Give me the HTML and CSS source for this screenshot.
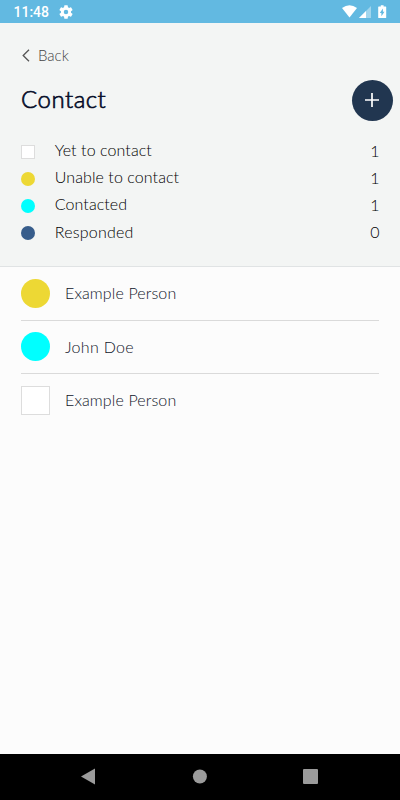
FILE: index.html
```html
<!DOCTYPE html>
<html lang="en">
<head>
<meta charset="utf-8">
<title>Contact</title>
<link rel="stylesheet" href="styles.css">
</head>
<body>
<div class="statusbar">
  <span class="time">11:48</span>
  <svg class="gear" width="14" height="14" viewBox="2 2 20 20"><path fill="#fff" d="M19.14 12.94c.04-.3.06-.61.06-.94s-.02-.64-.07-.94l2.03-1.58a.5.5 0 0 0 .12-.61l-1.92-3.32a.49.49 0 0 0-.59-.22l-2.39.96a7 7 0 0 0-1.62-.94l-.36-2.54A.48.48 0 0 0 13.92 2.4h-3.84a.48.48 0 0 0-.48.41l-.36 2.54a7.4 7.4 0 0 0-1.62.94l-2.39-.96a.49.49 0 0 0-.59.22L2.72 8.87a.48.48 0 0 0 .12.61l2.03 1.58a6 6 0 0 0 0 1.88l-2.03 1.58a.5.5 0 0 0-.12.61l1.92 3.32c.12.22.37.29.59.22l2.39-.96c.5.38 1.03.7 1.62.94l.36 2.54c.05.24.24.41.48.41h3.84c.24 0 .44-.17.48-.41l.36-2.54a7.3 7.3 0 0 0 1.62-.94l2.39.96c.22.08.47 0 .59-.22l1.92-3.32a.48.48 0 0 0-.12-.61zM12 15.2a3.2 3.2 0 1 1 0-6.4 3.2 3.2 0 0 1 0 6.4z"/></svg>
  <svg class="signals" width="46" height="14" viewBox="0 0 46 14"><path fill="#fff" d="M0 3.1Q7.5-2.7 15 3.1L7.5 12.6z"/><path fill="#fff" fill-opacity=".4" d="M29 1v12H17z"/><path fill="#fff" d="M24 6v7h-7z"/><path fill="#fff" d="M36.8 1.4h2V.2h2.8v1.2h2q.6 0 .6.6v10.4q0 .6-.6.6h-6.8q-.6 0-.6-.6V2q0-.6.6-.6z"/><path fill="#62b9e1" d="M40.9 3.6v3.1h1.6l-3.1 4.6V8.1h-1.6z"/></svg>
</div>
<header class="header">
  <div class="back"><svg width="8" height="13" viewBox="0 0 8 13"><path d="M7 .8 1.2 6.5 7 12.2" fill="none" stroke="#555" stroke-width="1.3"/></svg><span>Back</span></div>
  <div class="titlebar"><h1>Contact</h1><div class="add"><svg width="14" height="14" viewBox="0 0 14 14"><path d="M7 0v14M0 7h14" stroke="#fff" stroke-width="1.7"/></svg></div></div>
  <ul class="legend">
    <li><i class="mark box"></i><span>Yet to contact</span><b>1</b></li>
    <li><i class="mark yellow"></i><span>Unable to contact</span><b>1</b></li>
    <li><i class="mark cyan"></i><span>Contacted</span><b>1</b></li>
    <li><i class="mark blue"></i><span>Responded</span><b>0</b></li>
  </ul>
</header>
<main class="people">
  <div class="person"><i class="mark yellow"></i><span>Example Person</span></div>
  <div class="person"><i class="mark cyan"></i><span class="john">John Doe</span></div>
  <div class="person"><i class="mark box"></i><span>Example Person</span></div>
</main>
<nav class="navbar">
  <svg width="400" height="46" viewBox="0 0 400 46"><g fill="#9b9b9b"><path d="M81 22.5 95 14.5v16z"/><circle cx="199.9" cy="22.5" r="7"/><rect x="303" y="15" width="15" height="15" rx="1"/></g></svg>
</nav>
</body>
</html>
```
FILE: styles.css
```css
* { box-sizing: border-box; }
body {
  margin: 0;
  width: 400px;
  height: 800px;
  display: flex;
  flex-direction: column;
  overflow: hidden;
  background: #fcfcfc;
  font-family: Lato, sans-serif;
  font-weight: 300;
  color: #000;
}
svg { display: block; flex: none; }
.statusbar {
  height: 23px;
  background: #62b9e1;
  display: flex;
  align-items: center;
  padding: 1px 12px 0 13.5px;
}
.time {
  font: 500 14px/20px Roboto, sans-serif;
  color: #fff;
  width: 45.5px;
}
.signals { margin-left: auto; }
.header {
  height: 244px;
  background: #f3f5f4;
  border-bottom: 1px solid #e0e3e4;
}
.back {
  display: flex;
  align-items: center;
  height: 20px;
  margin: 22px 0 0 22px;
  font-size: 15px;
  color: #444;
}
.back span { margin-left: 8px; }
.titlebar {
  display: flex;
  align-items: center;
  justify-content: space-between;
  height: 42px;
  margin: 14px 7.5px 0 21px;
}
h1 {
  margin: 0;
  padding-bottom: 3px;
  font-size: 24px;
  line-height: 30px;
  font-weight: 300;
  letter-spacing: .5px;
  -webkit-text-stroke: .65px #050c28;
  color: #050c28;
}
.add {
  width: 41px;
  height: 41px;
  border-radius: 50%;
  background: #213650;
  display: grid;
  place-items: center;
}
.legend {
  list-style: none;
  margin: 17px 20.5px 0 21.3px;
  padding: 0;
}
.legend li {
  display: flex;
  align-items: center;
  height: 27.2px;
  font-size: 16px;
  letter-spacing: .08px;
}
.legend .mark { width: 14px; height: 14px; margin: 1px 19.5px 0 0; }
.legend li:last-child .mark { margin-top: 0; }
.legend span { line-height: 20px; padding-bottom: 4px; }
.legend li:last-child span { padding-bottom: 3px; letter-spacing: .2px; }
.legend b { margin-left: auto; font-weight: 300; line-height: 20px; padding-bottom: 2px; }
.mark { border-radius: 50%; flex: none; }
.yellow { background: #edd834; }
.cyan { background: #00ffff; }
.blue { background: #375d8b; }
.box { background: #fff; border: 1px solid #ddd; border-radius: 0; }
.people { flex: 1; padding: 0 21px; }
.person {
  display: flex;
  align-items: center;
  height: 53.5px;
  border-bottom: 1px solid #dadada;
  font-size: 16px;
  letter-spacing: .12px;
  color: #10152a;
}
.person:last-child { border-bottom: 0; }
.person span { padding-bottom: 2px; }
.person .john { letter-spacing: .3px; padding-bottom: 0; }
.person .mark { width: 29px; height: 29px; margin: 0 14.6px 0 .4px; }
.navbar { height: 46px; background: #000; }
```
